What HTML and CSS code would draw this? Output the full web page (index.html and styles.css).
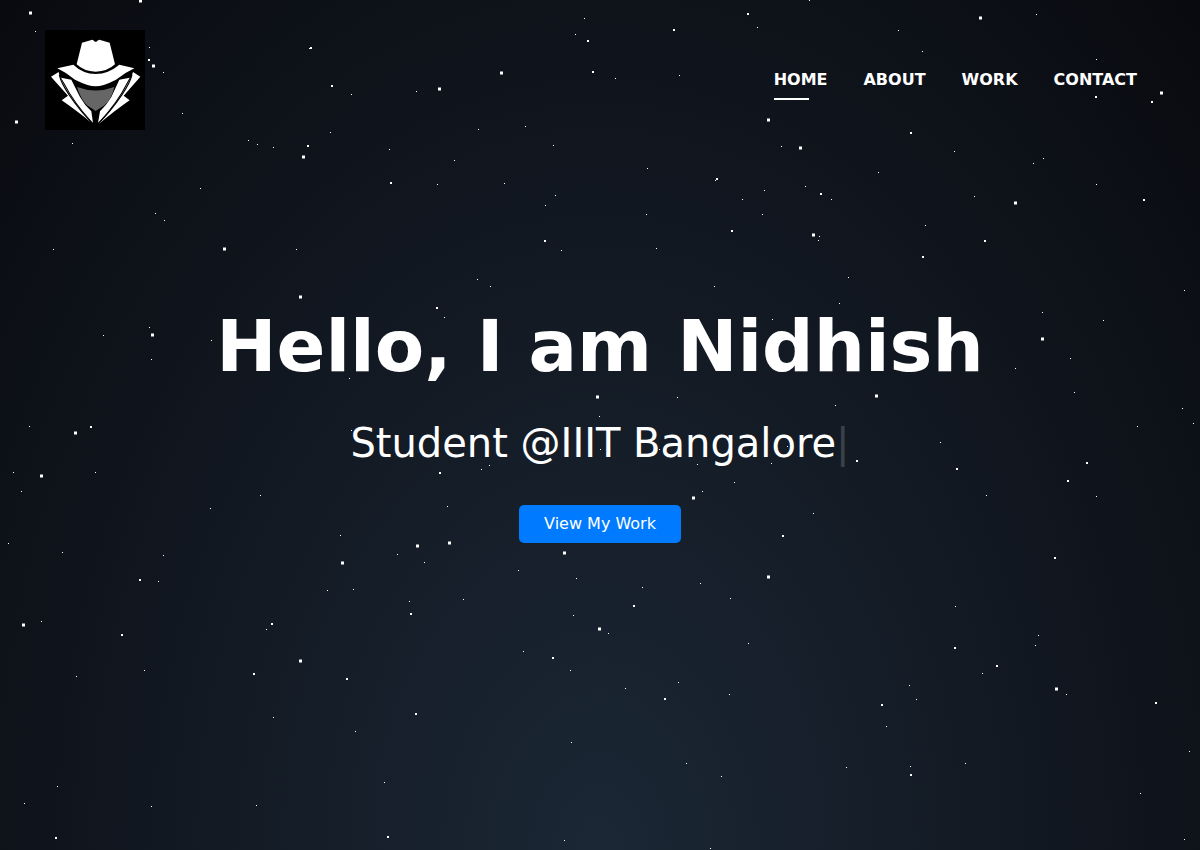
FILE: index.html
```html
<!DOCTYPE html>
<html lang="en">
<head>
<meta charset="utf-8">
<title>Nidhish</title>
<link rel="stylesheet" href="styles.css">
</head>
<body>
<div class="sky" aria-hidden="true">
  <div class="stars stars-small"></div>
  <div class="stars stars-medium"></div>
  <div class="stars stars-large"></div>
</div>
<div class="page">
  <header class="header">
    <a class="logo" href="#home" aria-label="Home">
      <svg viewBox="0 0 300 300" width="100" height="100">
        <rect width="300" height="300" fill="#000"/>
        <g fill="#fff">
          <path d="M111 38 L142 29 L147 32 Q152 39 157 32 L163 29 L194 38 L210 103 Q188 124 152 125 Q116 124 95 103 Z"/>
          <path d="M37 115 L85 104 Q113 131 152 132 Q191 131 223 104 L268 115 Q240 128 213 149 Q174 169 152 169 Q130 169 90 149 Q64 128 37 115 Z"/>
          <path d="M41 126 L18 140 L69 197 L50 211 Q92 240 143 281 Q84 217 54 159 Q43 142 41 126 Z"/>
          <path d="M264 126 L286 140 L236 197 L254 211 Q212 240 160 283 Q220 217 249 159 Q260 142 264 126 Z"/>
          <path d="M48 143 L79 149 L105 201 Q119 226 139 244 L144 279 Q87 216 59 161 Z"/>
          <path d="M254 143 L223 149 L199 201 Q184 226 165 244 L159 279 Q217 216 244 161 Z"/>
        </g>
        <g class="logo-seams">
          <path d="M43 134 Q47 157 72 194 Q106 244 145 283"/>
          <path d="M261 134 Q256 157 231 194 Q197 244 158 283"/>
        </g>
        <path fill="#666" d="M96 171 Q152 192 208 171 Q199 208 179 226 L152 243 L126 226 Q108 209 96 171 Z"/>
      </svg>
    </a>
    <nav class="nav">
      <a class="nav-link active" href="#home">HOME</a>
      <a class="nav-link" href="#about">ABOUT</a>
      <a class="nav-link" href="#work">WORK</a>
      <a class="nav-link" href="#contact">CONTACT</a>
    </nav>
  </header>
  <main class="hero">
    <h1 class="title">Hello, I am Nidhish</h1>
    <p class="subtitle">Student @IIIT Bangalore<span class="cursor">|</span></p>
    <a class="button" href="#work">View My Work</a>
  </main>
</div>
</body>
</html>
```
FILE: styles.css
```css
* { box-sizing: border-box; }

body {
  margin: 0;
  height: 850px;
  overflow: hidden;
  background: #090a0f;
  color: #fff;
  font-family: "DejaVu Sans", sans-serif;
  font-size: 16px;
}

a { color: inherit; text-decoration: none; }

.sky {
  position: absolute;
  inset: 0;
  overflow: hidden;
  background: radial-gradient(ellipse at bottom, #1b2735 0%, #090a0f 100%);
}

/* Each layer is one transparent square whose shadows are the stars. */
.stars {
  position: absolute;
  top: 0;
  left: 0;
}

.stars-small {
  width: 1px;
  height: 1px;
  box-shadow:
    35px 31px #fff, 149px 47px #fff, 163px 72px #fff, 182px 113px #fff, 72px 143px #fff,
    248px 140px #fff, 257px 144px #fff, 273px 147px #fff, 200px 188px #fff, 155px 213px #fff,
    164px 220px #fff, 53px 249px #fff, 296px 249px #fff, 351px 94px #fff, 330px 132px #fff,
    389px 149px #fff, 309px 48px #fff, 584px 18px #fff, 575px 34px #fff, 615px 78px #fff,
    679px 75px #fff, 757px 27px #fff, 416px 91px #fff, 478px 129px #fff, 525px 126px #fff,
    553px 145px #fff, 454px 160px #fff, 437px 184px #fff, 504px 183px #fff, 555px 195px #fff,
    545px 205px #fff, 647px 168px #fff, 646px 214px #fff, 715px 180px #fff, 742px 199px #fff,
    764px 190px #fff, 762px 214px #fff, 781px 146px #fff, 561px 250px #fff, 656px 248px #fff,
    477px 279px #fff, 490px 286px #fff, 714px 286px #fff, 809px 0 #fff, 898px 30px #fff,
    922px 51px #fff, 1036px 14px #fff, 1096px 59px #fff, 954px 151px #fff, 1043px 158px #fff,
    1033px 163px #fff, 878px 172px #fff, 1096px 184px #fff, 805px 186px #fff, 831px 199px #fff,
    974px 196px #fff, 925px 225px #fff, 819px 236px #fff, 818px 240px #fff, 848px 277px #fff,
    103px 335px #fff, 149px 327px #fff, 151px 359px #fff, 211px 340px #fff, 29px 426px #fff,
    13px 472px #fff, 21px 491px #fff, 95px 472px #fff, 210px 508px #fff, 8px 543px #fff,
    62px 552px #fff, 163px 555px #fff, 444px 317px #fff, 349px 378px #fff, 351px 430px #fff,
    489px 465px #fff, 481px 469px #fff, 260px 495px #fff, 447px 506px #fff, 340px 535px #fff,
    397px 554px #fff, 599px 416px #fff, 839px 303px #fff, 772px 319px #fff, 677px 397px #fff,
    835px 405px #fff, 600px 449px #fff, 659px 449px #fff, 787px 446px #fff, 697px 464px #fff,
    771px 463px #fff, 734px 482px #fff, 702px 491px #fff, 813px 513px #fff, 940px 442px #fff,
    986px 495px #fff, 1184px 290px #fff, 1042px 312px #fff, 1103px 320px #fff, 1070px 358px #fff,
    1015px 368px #fff, 1074px 392px #fff, 1182px 408px #fff, 1193px 423px #fff, 1137px 426px #fff,
    1096px 496px #fff, 158px 581px #fff, 41px 621px #fff, 144px 670px #fff, 76px 676px #fff,
    57px 786px #fff, 24px 803px #fff, 151px 806px #fff, 256px 805px #fff, 327px 590px #fff,
    353px 589px #fff, 266px 629px #fff, 273px 717px #fff, 355px 731px #fff, 384px 782px #fff,
    424px 562px #fff, 518px 570px #fff, 576px 578px #fff, 642px 587px #fff, 700px 583px #fff,
    730px 598px #fff, 409px 601px #fff, 463px 599px #fff, 573px 615px #fff, 608px 633px #fff,
    523px 651px #fff, 570px 670px #fff, 625px 688px #fff, 678px 682px #fff, 748px 643px #fff,
    729px 694px #fff, 571px 742px #fff, 686px 763px #fff, 721px 776px #fff, 564px 840px #fff,
    710px 848px #fff, 955px 606px #fff, 1038px 635px #fff, 1035px 645px #fff, 982px 673px #fff,
    909px 685px #fff, 916px 699px #fff, 886px 726px #fff, 1066px 694px #fff, 846px 767px #fff,
    910px 766px #fff, 965px 763px #fff, 1189px 751px #fff, 1140px 793px #fff, 1184px 839px #fff;
}

.stars-medium {
  width: 2px;
  height: 2px;
  box-shadow:
    148px 59px #fff, 310px 47px #fff, 331px 85px #fff, 307px 145px #fff, 390px 182px #fff,
    587px 40px #fff, 673px 29px #fff, 747px 13px #fff, 592px 71px #fff, 716px 178px #fff,
    731px 230px #fff, 544px 240px #fff, 1095px 96px #fff, 1151px 101px #fff, 910px 132px #fff,
    820px 193px #fff, 1143px 199px #fff, 984px 240px #fff, 922px 256px #fff, 90px 426px #fff,
    436px 307px #fff, 439px 472px #fff, 856px 460px #fff, 956px 468px #fff, 782px 535px #fff,
    1086px 462px #fff, 1067px 480px #fff, 1054px 557px #fff, 139px 579px #fff, 121px 634px #fff,
    271px 623px #fff, 253px 673px #fff, 346px 678px #fff, 55px 837px #fff, 387px 836px #fff,
    410px 613px #fff, 633px 605px #fff, 552px 657px #fff, 664px 698px #fff, 415px 713px #fff,
    954px 647px #fff, 996px 665px #fff, 881px 704px #fff, 910px 774px #fff, 1155px 702px #fff;
}

.stars-large {
  width: 3px;
  height: 3px;
  box-shadow:
    29px 11.5px #fff, 139px -0.5px #fff, 152px 64.5px #fff, 15px 120.5px #fff, 302px 155.5px #fff,
    223px 247.5px #fff, 500px 71.5px #fff, 438px 87.5px #fff, 767px 118.5px #fff, 799px 146.5px #fff,
    979px 16.5px #fff, 1160px 91.5px #fff, 1014px 201.5px #fff, 812px 233.5px #fff, 151px 333.5px #fff,
    74px 431.5px #fff, 40px 474.5px #fff, 299px 295.5px #fff, 596px 395.5px #fff, 416px 544.5px #fff,
    448px 541.5px #fff, 563px 551.5px #fff, 875px 394.5px #fff, 692px 496.5px #fff, 1041px 337.5px #fff,
    341px 561.5px #fff, 22px 623.5px #fff, 299px 659.5px #fff, 767px 575.5px #fff, 598px 627.5px #fff,
    1055px 687.5px #fff;
}

.page {
  position: relative;
  height: 850px;
  display: flex;
  flex-direction: column;
}

.header {
  display: flex;
  justify-content: space-between;
  align-items: center;
  padding: 30px 63px 0 45px;
}

.logo, .logo svg { display: block; }

.logo-seams {
  fill: none;
  stroke: #000;
  stroke-width: 3.5;
}

.nav {
  display: flex;
  gap: 36px;
}

.nav-link {
  position: relative;
  font-weight: 700;
  line-height: 20px;
}

.nav-link.active::after {
  content: "";
  position: absolute;
  left: 0;
  top: 28px;
  width: 35px;
  height: 2px;
  background: #fff;
}

.hero {
  display: flex;
  flex-direction: column;
  align-items: center;
  padding-top: 174px;
}

.title {
  margin: 0;
  font-size: 72px;
  line-height: 84px;
  font-weight: 700;
}

.subtitle {
  margin: 31px 0 0;
  font-size: 40px;
  line-height: 48px;
}

.cursor { opacity: 0.17; }

.button {
  margin-top: 38px;
  padding: 0 25px;
  border-radius: 5px;
  background: #007bff;
  line-height: 38px;
}
```
